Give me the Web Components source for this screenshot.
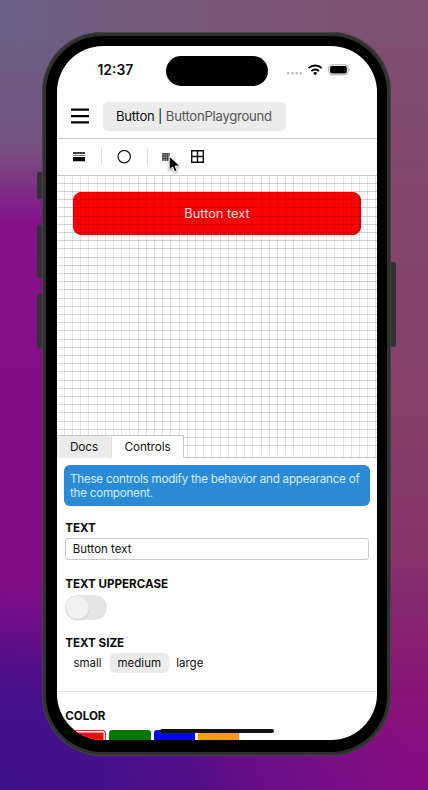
<!DOCTYPE html>
<html lang="en">
<head>
<meta charset="utf-8">
<title>Button playground</title>
<style>
html,body{margin:0;height:790px;overflow:hidden}
body{font-family:Inter,"Liberation Sans",sans-serif;color:#111;
background:
radial-gradient(ellipse 240px 210px at 0% 100%,#40108c 0%,#40108bee 45%,#40108b00 100%),
radial-gradient(ellipse 230px 150px at 45% 100%,#5a1088 0%,#5a108800 100%),
linear-gradient(90deg,#6a6084 0%,#77587c 40%,#7f5070 100%) 0 0/100% 46px no-repeat,
linear-gradient(180deg,#6a6082 0,#705880 110px,#775080 150px,#84108a 225px,#840e88 600px,#7a0e88 790px) 0 0/214px 100% no-repeat,
linear-gradient(180deg,#7f5070 0,#85466e 200px,#854068 400px,#86336c 560px,#881478 690px,#880c88 790px)}
</style>
</head>
<body>
<phone-frame>
  <status-bar></status-bar>
  <title-bar><span>Button |</span><span slot="story">ButtonPlayground</span></title-bar>
  <tool-bar></tool-bar>
  <preview-canvas>Button text</preview-canvas>
  <control-panel></control-panel>
</phone-frame>
<script>
const define=(name,html,setup)=>customElements.define(name,class extends HTMLElement{
  constructor(){super();const t=document.createElement('template');t.innerHTML=html;
    this.attachShadow({mode:'open'}).append(t.content.cloneNode(true));if(setup)setup(this.shadowRoot);}
});

define('status-bar',`<style>
:host{display:grid;grid-template-columns:109px 102px 1fr;height:46px;align-items:center;box-sizing:border-box}
.time{font-size:13.9px;font-weight:600;padding-left:40.5px;padding-top:2px}
.island{height:30px;border-radius:15px;background:#000;margin-top:3px}
.icons{display:flex;align-items:center;padding-left:17px}
svg{display:block}
</style><div class="time">12:37</div><div class="island"></div>
<div class="icons"><svg width="68" height="18" viewBox="0 0 68 18">
<g fill="#bbb"><rect x="1.9" y="12" width="2.5" height="2.5" rx=".8"/><rect x="6.3" y="12" width="2.5" height="2.5" rx=".8"/><rect x="10.4" y="12" width="2.5" height="2.5" rx=".8"/><rect x="14.6" y="12" width="2.5" height="2.5" rx=".8"/></g>
<g fill="none" stroke="#000" stroke-width="1.9"><path d="M23.7 8.2a9.2 9.2 0 0 1 13 0"/><path d="M26.4 11.1a5.4 5.4 0 0 1 7.6 0"/></g><path d="M28.1 13a3.2 3.2 0 0 1 4.2 0L30.2 15.2z"/>
<rect x="43.7" y="4.8" width="19.4" height="10" rx="3.2" fill="none" stroke="#aaa"/><rect x="45" y="6" width="16.8" height="7.6" rx="2"/><path d="M64.4 8q1.8 1.8 0 3.6z" fill="#999"/>
</svg></div>`);

define('title-bar',`<style>
:host{display:flex;align-items:center;height:47px;padding:2px 0 0 14px;gap:14px;border-bottom:1px solid #c8c8c8;box-sizing:border-box}
.pill{display:flex;align-items:center;gap:3.7px;height:29px;width:183px;box-sizing:border-box;padding:0 0 0 13px;border-radius:5px;background:#ebebeb;font-size:13.1px;letter-spacing:-.24px;white-space:nowrap;color:#111}
.story{color:#555}
svg{display:block}
</style><svg width="18" height="18"><path d="M0 2.7h18M0 9.2h18M0 15.4h18" stroke="#000" stroke-width="2.2"/></svg>
<div class="pill"><slot></slot><span class="story"><slot name="story"></slot></span></div>`);

define('tool-bar',`<style>
:host{display:grid;grid-template-columns:44px 46px 1fr;height:37px;align-items:center;border-bottom:1px solid #c8c8c8;box-sizing:border-box;position:relative;padding-bottom:1px}
.cell{display:flex;align-items:center;height:17px}
.cell+.cell{border-left:1px solid #dcdcdc}
svg{display:block}
.line{padding-left:16px}.circle{padding-left:15px}.grids{padding-left:14px;gap:21px}
.pointer{position:absolute;left:110px;top:14.5px}
</style>
<div class="cell line"><svg width="12" height="10"><path d="M0 1h12" stroke="#000" stroke-width="1.4"/><path d="M0 3.5h12" stroke="#777" stroke-width="1"/><path d="M0 5h12v4.2H0z"/></svg></div>
<div class="cell circle"><svg width="14" height="14"><circle cx="7.2" cy="6.6" r="6.2" fill="none" stroke="#111" stroke-width="1.2"/></svg></div>
<div class="cell grids"><svg width="8" height="8"><path d="M0 0h8v8H0z" fill="#999"/><path d="M0 1h8M0 3.3h8M0 5.6h8M1 0v8M3.3 0v8M5.6 0v8" stroke="#444" stroke-width=".9"/></svg>
<svg width="13" height="13"><path d="M.7.7h11.6v11.6H.7zM6.5 0v13M0 6.5h13" fill="none" stroke="#111" stroke-width="1.4"/></svg></div>
<svg class="pointer" width="15" height="20" viewBox="0 0 15 20"><path d="M2.2 2v14.2l3.4-3.2 2 4.9 2.6-1-2-4.8h4.8z" fill="#000" stroke="#fff" stroke-width="1" style="filter:drop-shadow(0 1px 1px #0006)"/></svg>`);

define('preview-canvas',`<style>
:host{display:block;position:relative;height:282px;box-sizing:border-box;padding:16px;background:#fff}
.button{display:flex;align-items:center;justify-content:center;height:43px;border-radius:8px;background:#f00;color:#ffe0e0;font-size:12.8px;box-sizing:border-box;border:1px solid #e20000}
.grid{position:absolute;inset:0;pointer-events:none}
.label{position:relative;z-index:1}
</style><div class="button"><span class="label"><slot></slot></span></div><svg class="grid" width="320" height="282" shape-rendering="crispEdges"></svg>`,root=>{
  const step=8.205,svg=root.querySelector('svg');let v='',h='';
  for(let x=step;x<320;x+=step)v+=`M${Math.floor(x)-.5} 0V282`;
  for(let y=step;y<278;y+=step)h+=`M0 ${Math.floor(y)-.5}H320`;
  svg.innerHTML=`<path d="${v}" stroke="#000" stroke-opacity=".11"/><path d="${h}" stroke="#000" stroke-opacity=".17"/>`;
});

define('control-field',`<style>
:host{display:block}
.name{font-size:11.6px;font-weight:700;line-height:14px;color:#0a0a0a}
</style><div class="name"><slot name="name"></slot></div><slot></slot>`);

define('control-panel',`<style>
:host{display:block;position:relative;height:282px}
.tabs{display:flex;position:absolute;left:0;top:-23px;height:23px;width:320px}
.tab{display:flex;align-items:center;justify-content:center;box-sizing:border-box;border-top:1px solid #c8c8c8;border-right:1px solid #c8c8c8;font-size:11.8px;background:#fff;height:23px}
.docs{width:55px;background:#ebebeb;border-right-color:#ddd;letter-spacing:-.1px}.controls{width:72px;letter-spacing:-.1px}
.rest{flex:1;border-bottom:1px solid #c8c8c8;box-sizing:border-box}
.note{margin:7px 7px 0 7px;height:41px;box-sizing:border-box;padding:6.5px 6px 0;border-radius:6px;background:#2b8ad6;color:#d5edff;font-size:11.6px;line-height:14px;white-space:nowrap;letter-spacing:-.22px}
.body{display:flow-root}
control-field{margin-left:8.2px}
.text{margin-top:15px}
.input{margin:3px 8px 0 0;height:22px;border:1px solid #c9c9c9;border-radius:3px;box-sizing:border-box;padding-left:6.5px;font-size:11.5px;line-height:20px}
.upper{margin-top:17px}.size{margin-top:16px}
.switch{width:42px;height:25px;margin-top:4px;border-radius:13px;background:#e4e4e4;display:flex;align-items:center}
.knob{width:23px;height:23px;margin-left:1px;border-radius:50%;background:#f1f1f1;box-shadow:0 1px 2px #0002}
.options{display:flex;margin-top:3px;height:20px;font-size:11.5px;line-height:20px;text-align:center}
.small{width:44.6px}.medium{width:59px;border-radius:5px;background:#ebebeb}.large{width:42px}
.rule{height:1px;background:#ddd;margin-top:18px}
.color{margin-top:17px}
.swatches{display:flex;gap:3px;margin-top:7px;margin-left:.1px}
.swatches i{width:41.2px;height:28px;border-radius:3px;box-sizing:border-box}
.red{background:#f00;border:1.5px solid #e22;box-shadow:inset 0 0 0 1.5px #fff}
.green{background:#007800}.blue{background:#00f}.orange{background:#ff9d00}
</style>
<div class="tabs"><div class="tab docs">Docs</div><div class="tab controls">Controls</div><div class="rest"></div></div>
<div class="body"><div class="note">These controls modify the behavior and appearance of<br>the component.</div>
<control-field class="text"><span slot="name">TEXT</span><div class="input">Button text</div></control-field>
<control-field class="upper"><span slot="name">TEXT UPPERCASE</span><div class="switch"><div class="knob"></div></div></control-field>
<control-field class="size"><span slot="name">TEXT SIZE</span><div class="options"><span class="small">small</span><span class="medium">medium</span><span class="large">large</span></div></control-field>
<div class="rule"></div>
<control-field class="color"><span slot="name">COLOR</span><div class="swatches"><i class="red"></i><i class="green"></i><i class="blue"></i><i class="orange"></i></div></control-field></div>`);

define('phone-frame',`<style>
:host{display:block;position:relative;width:349px;height:724px;margin:32px 0 0 42px}
.shell{position:relative;height:100%;box-sizing:border-box;padding:4px;border-radius:60px;background:#303030;box-shadow:inset 0 0 0 1px #444146}
.bezel{height:100%;box-sizing:border-box;background:#000;border-radius:56px;padding:10px 10px 10px 11px}
.screen{position:relative;height:694px;width:320px;border-radius:46px;overflow:hidden;background:#fff}
.key{position:absolute;width:5px;left:-5px;background:#333136;border-radius:2px 0 0 2px}
.home{position:absolute;left:103px;top:683px;width:114px;height:4px;border-radius:2px;background:#111}
</style>
<i class="key" style="top:140px;height:27px"></i><i class="key" style="top:193px;height:53px"></i><i class="key" style="top:262px;height:54px"></i><i class="key" style="left:349px;top:230px;height:85px;border-radius:0 2px 2px 0"></i>
<div class="shell"><div class="bezel"><div class="screen"><slot></slot><div class="home"></div></div></div></div>`);
</script>
</body>
</html>
